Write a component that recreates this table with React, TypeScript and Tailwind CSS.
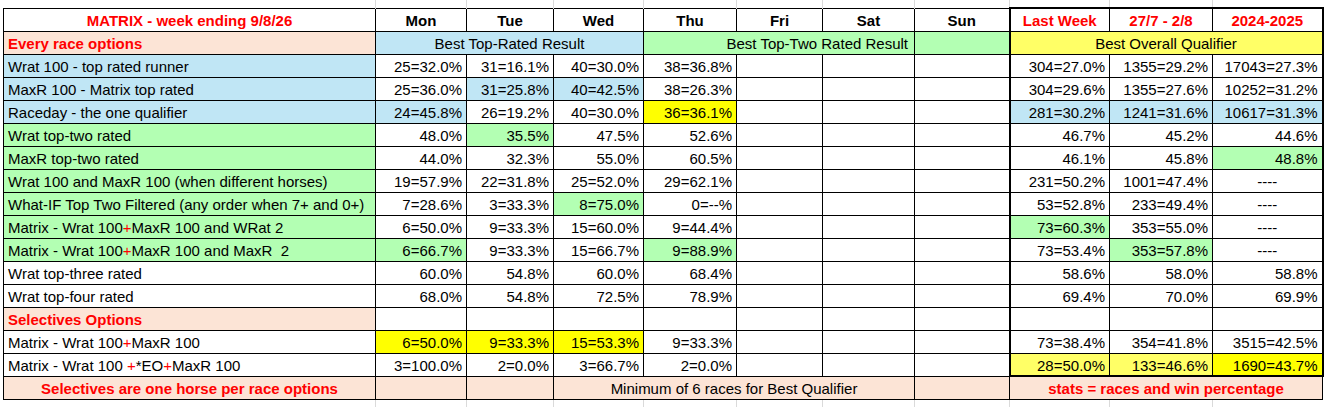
import React from "react";

const PEACH = "bg-[#fce4d6]";
const BLUE = "bg-[#c0e6f5]";
const GREEN = "bg-[#b3ffb3]";
const YEL = "bg-[#ffff00]";
const LYEL = "bg-[#ffff66]";

type V = { t: string; bg?: string; c?: boolean };
type Row = { label: React.ReactNode; bg: string; vals: (string | V)[] };

const R = <span className="text-[#ff0000]">+</span>;

const rows: Row[] = [
  {
    label: "Wrat 100 - top rated runner",
    bg: BLUE,
    vals: ["25=32.0%", "31=16.1%", "40=30.0%", "38=36.8%", "", "", "", "304=27.0%", "1355=29.2%", "17043=27.3%"],
  },
  {
    label: "MaxR 100 - Matrix top rated",
    bg: BLUE,
    vals: ["25=36.0%", { t: "31=25.8%", bg: BLUE }, { t: "40=42.5%", bg: BLUE }, "38=26.3%", "", "", "", "304=29.6%", "1355=27.6%", "10252=31.2%"],
  },
  {
    label: "Raceday - the one qualifier",
    bg: BLUE,
    vals: [{ t: "24=45.8%", bg: BLUE }, "26=19.2%", "40=30.0%", { t: "36=36.1%", bg: YEL }, "", "", "", { t: "281=30.2%", bg: BLUE }, { t: "1241=31.6%", bg: BLUE }, { t: "10617=31.3%", bg: BLUE }],
  },
  {
    label: "Wrat top-two rated",
    bg: GREEN,
    vals: ["48.0%", { t: "35.5%", bg: GREEN }, "47.5%", "52.6%", "", "", "", "46.7%", "45.2%", "44.6%"],
  },
  {
    label: "MaxR top-two rated",
    bg: GREEN,
    vals: ["44.0%", "32.3%", "55.0%", "60.5%", "", "", "", "46.1%", "45.8%", { t: "48.8%", bg: GREEN }],
  },
  {
    label: "Wrat 100 and MaxR 100 (when different horses)",
    bg: GREEN,
    vals: ["19=57.9%", "22=31.8%", "25=52.0%", "29=62.1%", "", "", "", "231=50.2%", "1001=47.4%", { t: "----", c: true }],
  },
  {
    label: "What-IF Top Two Filtered (any order when 7+ and 0+)",
    bg: GREEN,
    vals: ["7=28.6%", "3=33.3%", { t: "8=75.0%", bg: GREEN }, "0=--%", "", "", "", "53=52.8%", "233=49.4%", { t: "----", c: true }],
  },
  {
    label: (
      <>
        Matrix - Wrat 100{R}MaxR 100 and WRat 2
      </>
    ),
    bg: GREEN,
    vals: ["6=50.0%", "9=33.3%", "15=60.0%", "9=44.4%", "", "", "", { t: "73=60.3%", bg: GREEN }, "353=55.0%", { t: "----", c: true }],
  },
  {
    label: (
      <>
        Matrix - Wrat 100{R}MaxR 100 and MaxR{"  "}2
      </>
    ),
    bg: GREEN,
    vals: [{ t: "6=66.7%", bg: GREEN }, "9=33.3%", "15=66.7%", { t: "9=88.9%", bg: GREEN }, "", "", "", "73=53.4%", { t: "353=57.8%", bg: GREEN }, { t: "----", c: true }],
  },
  {
    label: "Wrat top-three rated",
    bg: "",
    vals: ["60.0%", "54.8%", "60.0%", "68.4%", "", "", "", "58.6%", "58.0%", "58.8%"],
  },
  {
    label: "Wrat top-four rated",
    bg: "",
    vals: ["68.0%", "54.8%", "72.5%", "78.9%", "", "", "", "69.4%", "70.0%", "69.9%"],
  },
  {
    label: <span className="font-bold text-[#ff0000]">Selectives Options</span>,
    bg: PEACH,
    vals: ["", "", "", "", "", "", "", "", "", ""],
  },
  {
    label: (
      <>
        Matrix - Wrat 100{R}MaxR 100
      </>
    ),
    bg: "",
    vals: [{ t: "6=50.0%", bg: YEL }, { t: "9=33.3%", bg: YEL }, { t: "15=53.3%", bg: YEL }, "9=33.3%", "", "", "", "73=38.4%", "354=41.8%", "3515=42.5%"],
  },
  {
    label: (
      <>
        Matrix - Wrat 100 {R}*EO{R}MaxR 100
      </>
    ),
    bg: "",
    vals: ["3=100.0%", "2=0.0%", "3=66.7%", "2=0.0%", "", "", "", { t: "28=50.0%", bg: LYEL }, { t: "133=46.6%", bg: LYEL }, { t: "1690=43.7%", bg: YEL }],
  },
];

const widths = [372, 91, 87, 90, 93, 86, 92, 95, 100, 103, 110];
const days = ["Mon", "Tue", "Wed", "Thu", "Fri", "Sat", "Sun"];

const td = "border border-black px-[4px] pt-[2px] pb-0 whitespace-pre overflow-hidden leading-[17px] align-middle";

function rightEdge(i: number) {
  if (i === 8) return " border-l-2";
  if (i === 10) return " border-r-2";
  return "";
}

export default function App() {
  return (
    <div className="w-[1328px] h-[408px] bg-white overflow-hidden">
      <table
        className="ml-[3px] border-collapse table-fixed text-[15px] text-black font-['Liberation_Sans',Arial,sans-serif]"
        style={{ width: 1319 }}
      >
        <colgroup>
          {widths.map((w, i) => (
            <col key={i} style={{ width: w }} />
          ))}
        </colgroup>
        <tbody>
          <tr className="h-[8px]">
            {widths.map((_, i) => (
              <td key={i} className={i === 0 ? "p-0" : "p-0 border-l border-[#dadada]"} />
            ))}
          </tr>
          <tr className="h-[23px]">
            <td className={td + " text-center font-bold text-[#ff0000]"}>MATRIX - week ending 9/8/26</td>
            {days.map((d) => (
              <td key={d} className={td + " text-center font-bold"}>
                {d}
              </td>
            ))}
            <td className={td + " text-center font-bold text-[#ff0000] border-l-2 border-t-2"}>Last Week</td>
            <td className={td + " text-center font-bold text-[#ff0000] border-t-2"}>27/7 - 2/8</td>
            <td className={td + " text-center font-bold text-[#ff0000] border-t-2 border-r-2"}>2024-2025</td>
          </tr>
          <tr className="h-[23px]">
            <td className={td + " font-bold text-[#ff0000] " + PEACH}>Every race options</td>
            <td colSpan={3} className={td + " text-center " + BLUE}>
              Best Top-Rated Result
            </td>
            <td colSpan={3} className={td + " text-right pr-[6px] " + GREEN}>
              Best Top-Two Rated Result
            </td>
            <td className={td + " " + GREEN}></td>
            <td colSpan={3} className={td + " text-center border-l-2 border-r-2 " + LYEL}>
              Best Overall Qualifier
            </td>
          </tr>
          {rows.map((r, ri) => (
            <tr key={ri} className="h-[23px]">
              <td className={td + " " + r.bg}>{r.label}</td>
              {r.vals.map((v, i) => {
                const o: V = typeof v === "string" ? { t: v } : v;
                const last = ri === rows.length - 1 && i >= 7 ? " border-b-2" : "";
                return (
                  <td
                    key={i}
                    className={td + (o.c ? " text-center" : " text-right") + " " + (o.bg || "") + rightEdge(i + 1) + last}
                  >
                    {o.t}
                  </td>
                );
              })}
            </tr>
          ))}
          <tr className="h-[23px]">
            <td className={td + " text-center font-bold text-[#ff0000] " + PEACH}>Selectives are one horse per race options</td>
            <td className={td + " " + PEACH}></td>
            <td className={td + " " + PEACH}></td>
            <td colSpan={4} className={td + " text-center " + PEACH}>
              Minimum of 6 races for Best Qualifier
            </td>
            <td className={td + " " + PEACH}></td>
            <td colSpan={3} className={td + " text-center font-bold text-[#ff0000] " + PEACH}>
              stats = races and win percentage
            </td>
          </tr>
          <tr className="h-[8px]">
            {widths.map((_, i) => (
              <td key={i} className={i === 0 ? "p-0" : "p-0 border-l border-[#dadada]"} />
            ))}
          </tr>
        </tbody>
      </table>
    </div>
  );
}
